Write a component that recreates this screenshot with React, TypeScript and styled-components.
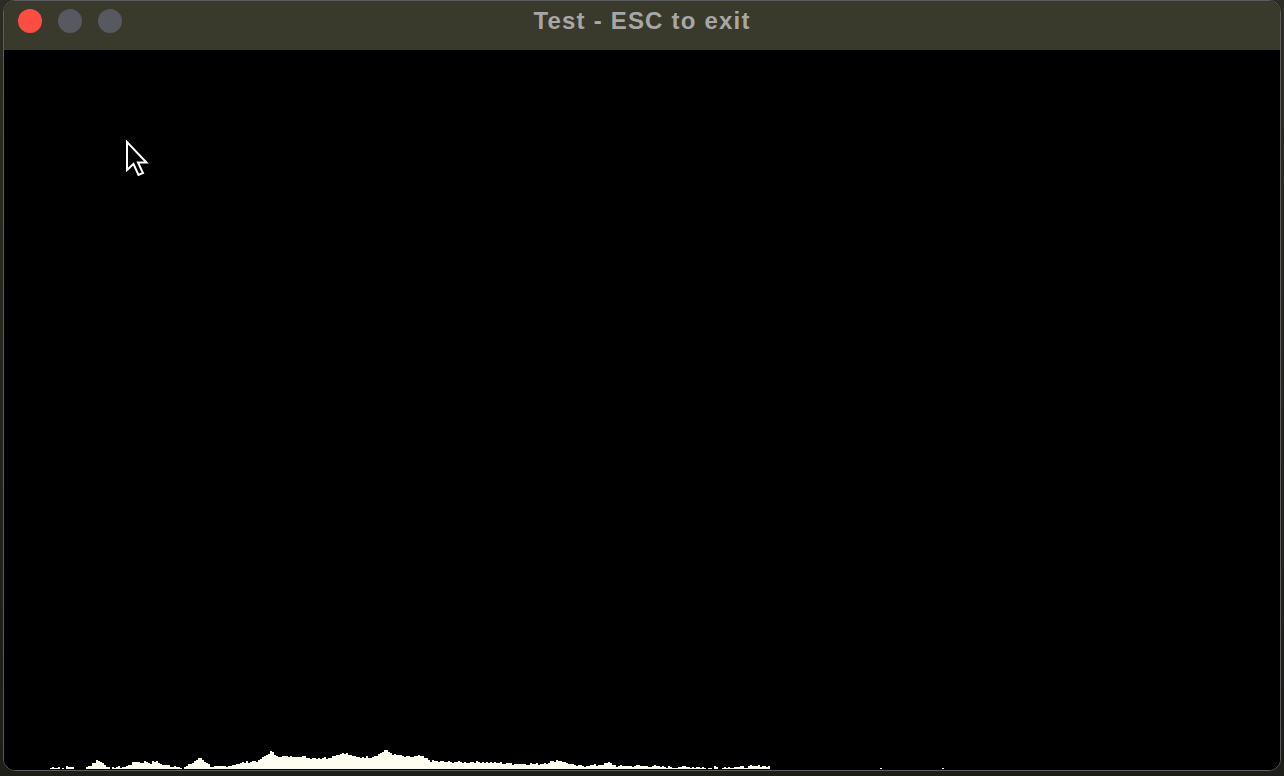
import React from "react";
import styled, { createGlobalStyle } from "styled-components";

const Global = createGlobalStyle`
  html, body { margin: 0; padding: 0; }
  body {
    background: #24241c;
    width: 1284px;
    height: 776px;
    overflow: hidden;
    font-family: "Liberation Sans", Arial, sans-serif;
  }
`;

const Desktop = styled.div`
  width: 1284px;
  height: 776px;
  padding-left: 3px;
  box-sizing: border-box;
  background: linear-gradient(#2c2c22, #1e1e18);
`;

const Window = styled.div`
  width: 1278px;
  height: 771px;
  box-sizing: border-box;
  border: 1px solid #5b5b60;
  border-radius: 12px;
  overflow: hidden;
  display: flex;
  flex-direction: column;
  background: #000;
`;

const TitleBar = styled.div`
  height: 49px;
  flex: none;
  display: grid;
  grid-template-columns: 1fr auto 1fr;
  align-items: start;
  padding: 8px 14px 0;
  box-sizing: border-box;
  background: #3a3a2c;
`;

const Lights = styled.div`
  display: flex;
  gap: 16px;
`;

const Light = styled.span<{ $color: string }>`
  width: 24px;
  height: 24px;
  border-radius: 50%;
  background: ${(p) => p.$color};
`;

const Title = styled.div`
  font-size: 24px;
  line-height: 24px;
  font-weight: 700;
  color: #a7a7a5;
  letter-spacing: 1.2px;
  white-space: nowrap;
`;

const Content = styled.div`
  flex: 1;
  position: relative;
  display: flex;
  flex-direction: column;
  justify-content: flex-end;
  background: #000;
`;

const Cursor = styled.svg`
  position: absolute;
  left: 121px;
  top: 90px;
`;

const Wave = styled.svg`
  display: block;
`;

const keys: [number, number][] = [
  [48, 0], [52, 2], [58, 2], [60, 0], [66, 2], [72, 2], [74, 0], [84, 0], [88, 3], [97, 9],
  [106, 3], [110, 0], [113, 2], [124, 2], [128, 4], [136, 8], [140, 6], [145, 8], [150, 6],
  [155, 8], [162, 4], [170, 3], [178, 3], [182, 0], [186, 3], [200, 11], [210, 3], [214, 2],
  [226, 2], [230, 4], [245, 7], [258, 8], [263, 12], [270, 17], [280, 12], [295, 13],
  [310, 11], [325, 11], [343, 16], [355, 12], [370, 12], [378, 15], [385, 19], [392, 15],
  [405, 12], [420, 13], [430, 8], [450, 7], [480, 7], [500, 6], [520, 5], [540, 5],
  [550, 7], [557, 9], [565, 6], [575, 3], [600, 4], [608, 6], [615, 3], [650, 3], [660, 2],
  [700, 2], [712, 0], [715, 5], [718, 0], [725, 2], [740, 2], [760, 3], [768, 3], [770, 0],
];

function envelope(x: number): number {
  for (let i = 0; i < keys.length - 1; i++) {
    const [x0, h0] = keys[i];
    const [x1, h1] = keys[i + 1];
    if (x >= x0 && x <= x1) {
      const t = x1 === x0 ? 0 : (x - x0) / (x1 - x0);
      return h0 + (h1 - h0) * t;
    }
  }
  return 0;
}

function buildBars() {
  const bars: { x: number; h: number }[] = [];
  let seed = 7;
  const rnd = () => {
    seed = (seed * 9301 + 49297) % 233280;
    return seed / 233280;
  };
  for (let x = 48; x < 770; x += 2) {
    const e = envelope(x);
    if (e <= 0.3) continue;
    let h = Math.round(e + (rnd() - 0.5) * 2.2);
    if (e > 4 && h < 2) h = 2;
    if (h <= 0) continue;
    bars.push({ x: x - 4, h });
  }
  bars.push({ x: 880 - 4, h: 1 });
  bars.push({ x: 942 - 4, h: 1 });
  return bars;
}

const bars = buildBars();

export default function App() {
  return (
    <>
      <Global />
      <Desktop>
        <Window>
          <TitleBar>
            <Lights>
              <Light $color="#fc4d43" />
              <Light $color="#585860" />
              <Light $color="#585860" />
            </Lights>
            <Title>Test - ESC to exit</Title>
            <div />
          </TitleBar>
          <Content>
            <Cursor width="26" height="38" viewBox="0 0 26 38">
              <path
                d="M2 2 L2 30 L8.5 24 L13.5 35 L18 33 L13 22.5 L21.5 22.5 Z"
                fill="#000"
                stroke="#fff"
                strokeWidth="2"
                strokeLinejoin="miter"
              />
            </Cursor>
            <Wave width="1276" height="22" viewBox="0 0 1276 22">
              {bars.map((b, i) => (
                <rect key={i} x={b.x} y={21 - b.h} width={2} height={b.h} fill="#fffdf0" />
              ))}
            </Wave>
          </Content>
        </Window>
      </Desktop>
    </>
  );
}
